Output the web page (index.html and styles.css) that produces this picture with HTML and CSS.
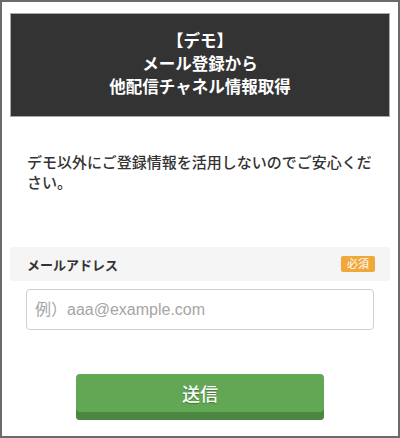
FILE: index.html
```html
<!DOCTYPE html>
<html lang="ja">
<head>
  <meta charset="UTF-8" />
  <meta name="viewport" content="width=device-width, initial-scale=1.0" />
  <title>【デモ】メール登録から他配信チャネル情報取得</title>
  <link rel="stylesheet" href="styles.css">
</head>
<body>
  <div class="frame">
    <h1 class="title">【デモ】<br>メール登録から<br>他配信チャネル情報取得</h1>

    <p class="lead">デモ以外にご登録情報を活用しないのでご安心ください。</p>

    <form class="form" onsubmit="return false;">
      <div class="field-head">
        <label for="email">メールアドレス</label>
        <span class="required">必須</span>
      </div>
      <div class="field-body">
        <input type="email" id="email" placeholder="例）aaa@example.com" />
      </div>
      <div class="actions">
        <button type="submit" class="submit">送信</button>
      </div>
    </form>
  </div>
</body>
</html>
```

FILE: styles.css
```css
html, body { margin: 0; padding: 0; background: #fff; }
body {
  font-family: "Liberation Sans", "Noto Sans CJK JP", sans-serif;
  color: #333;
}
.frame {
  box-sizing: border-box;
  width: 400px;
  height: 438px;
  border: 2px solid #6b6b6b;
  padding: 11px 8px 0;
}
.title {
  margin: 0;
  background: #333;
  border: 1px solid #a8a8a8;
  color: #fff;
  font-size: 16.5px;
  font-weight: bold;
  line-height: 23px;
  text-align: center;
  padding: 16px 0 17px;
}
.lead {
  margin: 36px 0 0;
  padding: 0 16px 0 17px;
  font-size: 15px;
  font-weight: 500;
  line-height: 20px;
  color: #333;
}
.form { margin-top: 54px; }
.field-head {
  display: flex;
  justify-content: space-between;
  align-items: center;
  height: 34px;
  padding: 0 15px 0 17px;
  background: #f5f5f5;
}
.field-head label {
  font-size: 13px;
  font-weight: bold;
  color: #333;
}
.required {
  background: #f1a83a;
  color: #fff;
  font-size: 11px;
  line-height: 16px;
  width: 34px;
  text-align: center;
  border-radius: 2px;
}
.field-body { padding: 8px 16px 0; }
.field-body input {
  box-sizing: border-box;
  width: 100%;
  height: 41px;
  border: 1px solid #cfcfcf;
  border-radius: 4px;
  padding: 0 8px;
  font-family: inherit;
  font-size: 16px;
  color: #333;
}
.field-body input::placeholder { color: #a5a5a5; }
.actions {
  display: flex;
  justify-content: center;
  margin-top: 44px;
}
.submit {
  width: 248px;
  height: 46px;
  border: none;
  border-radius: 4px;
  background: #62a854;
  box-shadow: inset 0 -8px 0 #4c8741;
  color: #fff;
  font-family: inherit;
  font-size: 18px;
  font-weight: 500;
  padding: 0 0 8px;
  text-shadow: 0 1px 1px rgba(0, 0, 0, 0.3);
  cursor: pointer;
}
```
